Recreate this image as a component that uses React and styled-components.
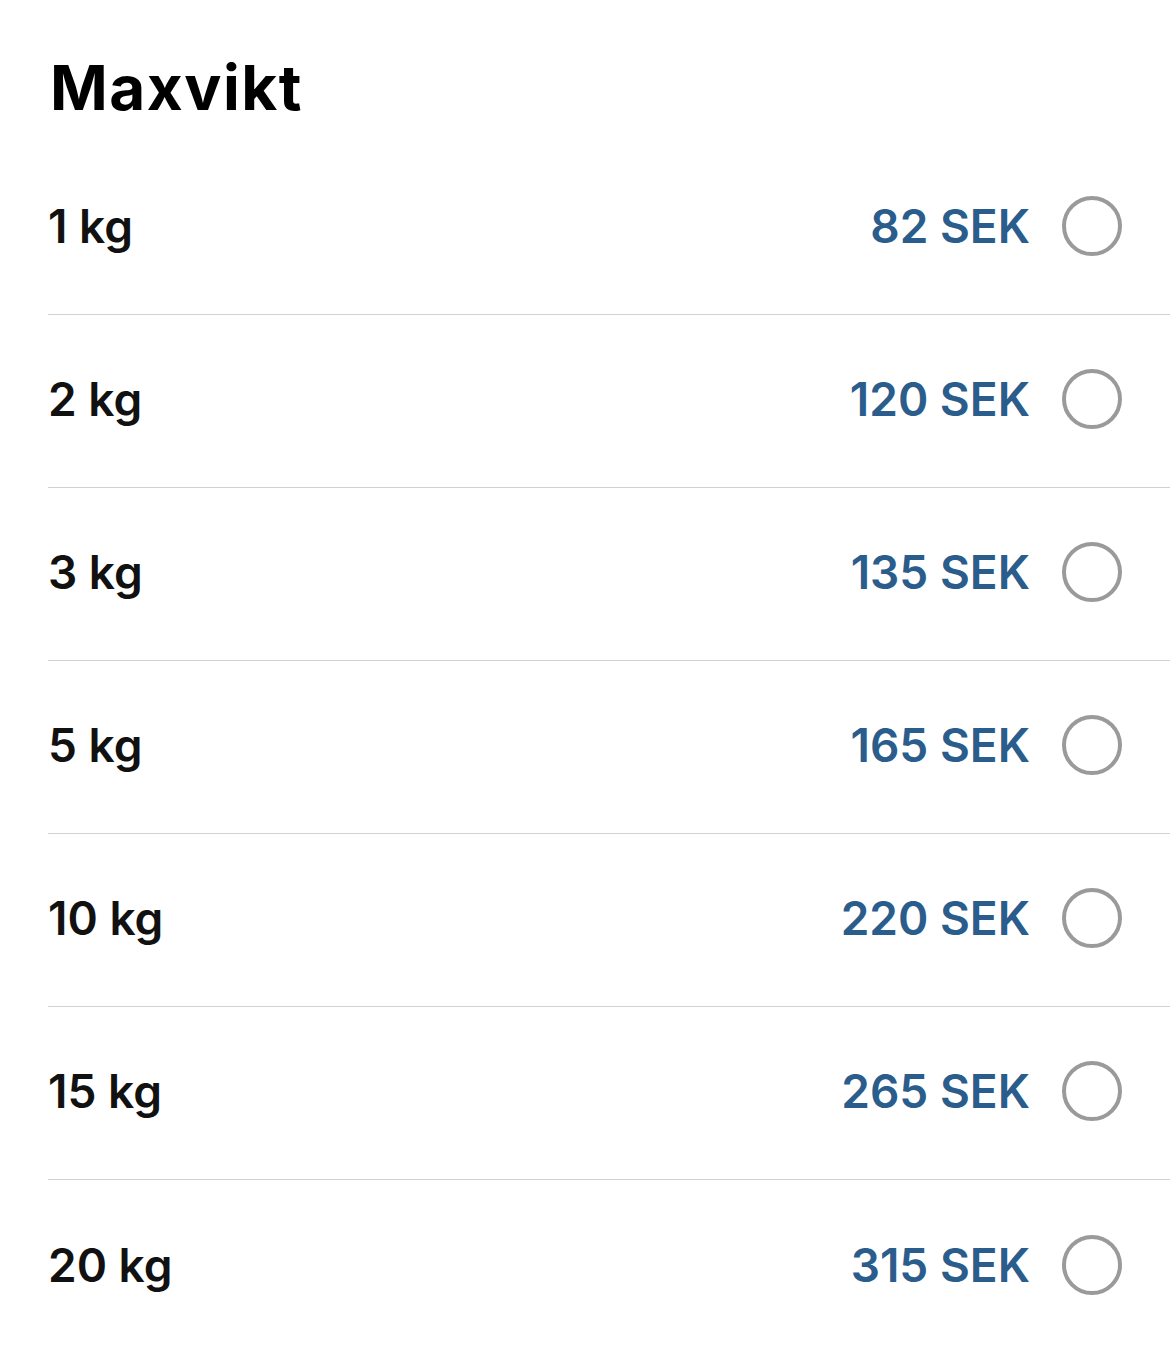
import React from "react";
import styled, { createGlobalStyle } from "styled-components";

const Global = createGlobalStyle`
  body {
    margin: 0;
    background: #fff;
    font-family: Inter, "Noto Sans", sans-serif;
  }
`;

const Page = styled.div`
  padding-left: 48px;
`;

const Title = styled.h1`
  margin: 57px 0 23px 2px;
  font-size: 62px;
  line-height: 62px;
  font-weight: 700;
  color: #000;
  letter-spacing: 1.5px;
`;

const Row = styled.label`
  box-sizing: border-box;
  display: flex;
  align-items: center;
  height: 173px;
  padding: 0 48px 4px 0;
  border-bottom: ${(p) => (p.last ? "none" : "1px solid #d2d2d2")};
  cursor: pointer;
`;

const Weight = styled.span`
  flex: 1;
  font-size: 46px;
  font-weight: 600;
  color: #111;
`;

const Price = styled.span`
  font-size: 46px;
  font-weight: 600;
  color: #2a5d8c;
  margin-right: 32px;
`;

const Radio = styled.span`
  box-sizing: border-box;
  width: 60px;
  height: 60px;
  border-radius: 50%;
  border: 4px solid #9a9a9a;
`;

const options = [
  ["1 kg", "82 SEK"],
  ["2 kg", "120 SEK"],
  ["3 kg", "135 SEK"],
  ["5 kg", "165 SEK"],
  ["10 kg", "220 SEK"],
  ["15 kg", "265 SEK"],
  ["20 kg", "315 SEK"],
];

export default function App() {
  return (
    <Page>
      <Global />
      <Title>Maxvikt</Title>
      {options.map(([w, p], i) => (
        <Row key={w} last={i === options.length - 1}>
          <Weight>{w}</Weight>
          <Price>{p}</Price>
          <Radio />
        </Row>
      ))}
    </Page>
  );
}
